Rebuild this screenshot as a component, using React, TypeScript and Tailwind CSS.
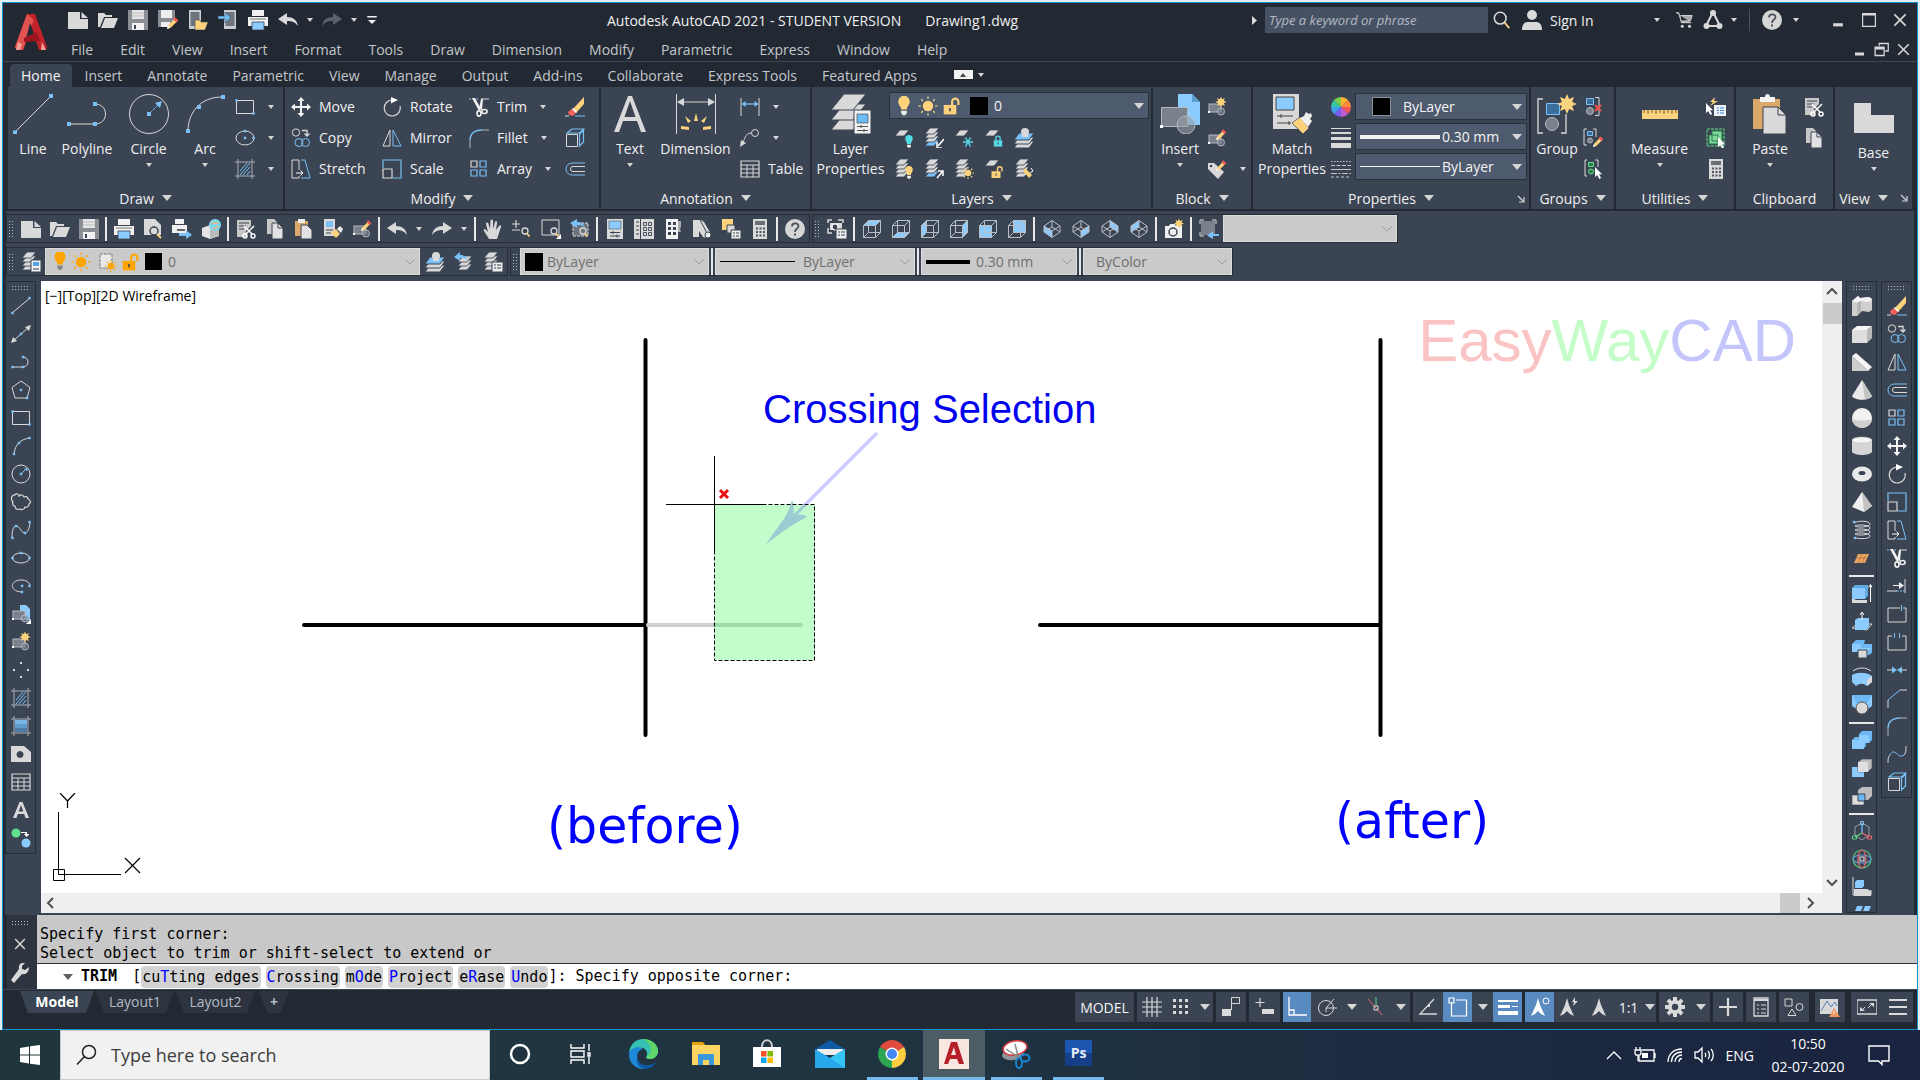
import type { ReactNode } from "react";

const G = "#d9d9d9";
const B = "#79c1f7";
const Y = "#fdd27c";
const D = "#3b4453";

/* ---------- drawing helpers ---------- */

const Dot = ({ x, y }: { x: number; y: number }) => <rect x={x - 1.2} y={y - 1.2} width="2.4" height="2.4" fill={B} stroke="none" />;

const Sheet = ({ y, c = G, x = 1 }: { y: number; c?: string; x?: number }) => (
  <path d={`M${x + 5} ${y}h9l-5 6h-9z`} fill={c} stroke={D} strokeWidth=".8" />
);

const Sheets = ({ mid = G }: { mid?: string }) => (
  <>
    <Sheet y={12} c={mid} />
    <Sheet y={8} />
    <Sheet y={4} />
    <Sheet y={0} />
  </>
);

const Star = ({ x, y, r }: { x: number; y: number; r: number }) => {
  const pts = Array.from({ length: 16 }, (_, i) => {
    const a = (i * Math.PI) / 8;
    const k = i % 2 ? r * 0.55 : r;
    return `${x + k * Math.sin(a)},${y - k * Math.cos(a)}`;
  });
  return <polygon points={pts.join(" ")} fill={Y} />;
};

const Sun = ({ x, y, r, c = Y }: { x: number; y: number; r: number; c?: string }) => (
  <g stroke={c} strokeWidth="1.2">
    <circle cx={x} cy={y} r={r * 0.55} fill={c} stroke="none" />
    {[0, 45, 90, 135, 180, 225, 270, 315].map((a) => (
      <path key={a} d={`M${x} ${y - r * 0.75}V${y - r}`} transform={`rotate(${a} ${x} ${y})`} />
    ))}
  </g>
);

const Bulb = ({ x, y, k = 1, c = Y, b = "#eee" }: { x: number; y: number; k?: number; c?: string; b?: string }) => (
  <g transform={`translate(${x} ${y}) scale(${k})`}>
    <path d="M-5-3a5 5 0 0 1 10 0c0 3-2.500 4-2.500 7h-5c0-3-2.500-4-2.500-7z" fill={c} />
    <path d="M-2.500 5h5v2l-1.500 2h-2l-1.500-2z" fill={b} />
  </g>
);

const Lock = ({ x, y, k = 1, c = Y, open = true }: { x: number; y: number; k?: number; c?: string; open?: boolean }) => (
  <g transform={`translate(${x} ${y}) scale(${k})`}>
    <path d={open ? "M2-1v-3a3 3 0 0 1 6 0v3" : "M-3-1v-3a3 3 0 0 1 6 0v3"} fill="none" stroke={c} strokeWidth="2" />
    <rect x="-6" y="-1" width="12" height="9" fill={c} />
    <path d="M0 2v3" stroke={D} strokeWidth="1.500" />
  </g>
);

const Pencil = ({ x, y, k = 1 }: { x: number; y: number; k?: number }) => (
  <g transform={`translate(${x} ${y}) scale(${k})`}>
    <path d="M0 10l1.500-4 6-6 2.500 2.500-6 6z" fill={Y} />
    <path d="M6-1.500 8-3.500 11.500 0 9.500 2z" transform="translate(0 1.500)" fill="#ef5b5b" />
    <path d="M0 10l1-3 2 2z" fill="#fff" />
  </g>
);

const Block = () => (
  <g stroke="#b4b8c0" fill="#7b818c">
    <rect x="2" y="7" width="12" height="8" />
    <circle cx="14" cy="14.500" r="3.500" fillOpacity=".6" />
    <path d="M1 14h2v2H1z" fill="#fff" stroke="none" />
  </g>
);

const Cursor = ({ x, y }: { x: number; y: number }) => (
  <path d={`M${x} ${y}v10l2.300-2 2 4 1.800-1-2-3.800h3z`} fill="#fff" />
);

const Cube = ({ face }: { face: string }) => (
  <>
    <path d={face} fill="#8ccbff" />
    <path d="M1.500 6.500h12v12h-12zM6.500 1.500h12v12h-12zM1.500 6.500l5-5M13.500 6.500l5-5M13.500 18.500l5-5M1.500 18.500l5-5" fill="none" stroke="#b9bfc7" />
  </>
);

const Iso = ({ face }: { face: string }) => (
  <>
    <path d={face} fill="#8ccbff" />
    <path d="M10 1.500 18 7v6l-8 5.500L2 13V7zM2 7l8 5 8-5M10 12v6.500M2 13l8-5 8 5M10 8V1.500" fill="none" stroke="#b9bfc7" />
  </>
);

const Magnifier = ({ x, y }: { x: number; y: number }) => (
  <g fill="none" strokeWidth="1.300">
    <circle cx={x} cy={y} r="3" stroke={G} />
    <path d={`M${x + 2} ${y + 2.5}l2.500 3`} stroke={Y} strokeWidth="1.800" />
  </g>
);

/* ---------- 20px icons ---------- */

const ICONS: Record<string, ReactNode> = {
  new: <path d="M0 2h12v7h8v10H0zM13.500 2 20 8h-6.500z" fill={G} />,
  open: <path d="M0 3h6l2 2h6v2H6L2 17H0zM7 8h13l-4 10H3z" fill={G} />,
  save: (
    <>
      <path d="M0 0h20v20H0z" fill="#8b8f95" />
      <path d="M4 0h12v9H4z" fill="#e6e6e6" />
      <path d="M4 3h12M4 6h12" stroke="#bbb" />
      <path d="M4 13h12v7H4z" fill="#f2f2f2" />
      <path d="M6 15h2v4H6z" fill={D} />
    </>
  ),
  saveAs: (
    <>
      <path d="M0 0h17v11l-6 6H0z" fill="#8b8f95" />
      <path d="M3 0h11v8H3zM3 12h9v5H3z" fill="#eee" />
      <Pencil x={9} y={9} />
    </>
  ),
  mobileOpen: (
    <>
      <path d="M1 0h12v19H1z" fill="#c9cdd1" />
      <path d="M2.500 2h9v14h-9z" fill="#6f757d" />
      <path d="M7 10h5l1 2h7l-3 8H7z" fill={Y} stroke={D} strokeWidth=".6" />
    </>
  ),
  mobileSave: (
    <>
      <path d="M6 0h12v19H6z" fill="#c9cdd1" />
      <path d="M7.500 2h9v14h-9z" fill="#6f757d" />
      <path d="M0 6h7V2l6 5.500-6 5.500V9H0z" fill="#6fbcf5" stroke={D} strokeWidth=".6" />
    </>
  ),
  print: (
    <>
      <path d="M4 0h12v6H4zM0 7h20v9H0z" fill="#f0f0f0" />
      <path d="M2 9h16" stroke="#777" />
      <path d="M4 12h12v8H4z" fill="#8ccbff" stroke={D} strokeWidth=".8" />
    </>
  ),
  undo: <path d="M0 9 9 3v4c6 0 10 3 11 9-3-4-6-5-11-5v4z" fill={G} />,
  redo: <path d="M20 9 11 3v4C5 7 1 10 0 16c3-4 6-5 11-5v4z" fill="currentColor" />,
  customize: <path d="M4 5h12v2H4zM5 10h10l-5 5z" fill="#f0f0f0" />,
  preview: (
    <>
      <path d="M1 0h11l6 6v10H1z" fill={G} />
      <circle cx="11" cy="12" r="4" fill={G} stroke={D} strokeWidth="1.500" />
      <path d="M14 15l4 4" stroke={Y} strokeWidth="2" />
    </>
  ),
  publish: (
    <>
      <path d="M3 0h9v5H3zM0 6h15v8H0z" fill="#f0f0f0" />
      <path d="M5 10h8v2H5z" fill="#666" />
      <path d="M7 14h7v-3l6 5-6 4v-3H7z" fill={B} />
    </>
  ),
  print3d: (
    <>
      <path d="M1 9l8-3 9 3v8l-9 3-8-3z" fill="#e4e4e4" />
      <path d="M9 11v9l9-3V9z" fill="#bcbcbc" />
      <circle cx="14" cy="6" r="6" fill="#7fd8ea" />
      <path d="M10 3c3 2 5 0 7 2M12 9c2 1 4 0 5-2" stroke="#f3b27a" fill="none" strokeWidth="1.500" />
    </>
  ),
  cut: (
    <>
      <path d="M1 1h14v6l-5 5v6H1z" fill="#c8c8c8" />
      <path d="M3 4h10M3 7h7M3 10h5" stroke={D} />
      <path d="M8 7l8 8M18 7l-8 8" stroke="#fff" strokeWidth="1.500" />
      <g fill="none" stroke="#fff" strokeWidth="1.500">
        <circle cx="9" cy="17" r="2" />
        <circle cx="17" cy="17" r="2" />
      </g>
    </>
  ),
  copy: (
    <>
      <path d="M2 0h7l3 3v12H2z" fill="#c8c8c8" />
      <path d="M7 4h6l5 5v11H7z" fill="#e2e2e2" stroke={D} />
      <path d="M13 4v5h5" fill="none" stroke={D} />
    </>
  ),
  paste: (
    <>
      <path d="M1 2h13v15H1z" fill="#d9a86a" />
      <path d="M4 0h7v4H4z" fill="#eee" />
      <path d="M7 6h6l5 5v9H7z" fill="#e2e2e2" stroke={D} />
    </>
  ),
  matchProps: (
    <>
      <path d="M1 0h11v17H1z" fill={G} />
      <path d="M3 2h7v6H3z" fill={B} />
      <path d="M3 11h7M3 14h5" stroke={D} />
      <path d="M8 14l5-4 4 5-4 4z" fill={Y} />
      <path d="M14 10l3-3 3 3-2 4z" fill="#eee" />
    </>
  ),
  blockEdit: (
    <>
      <Block />
      <Pencil x={9} y={3} k={0.9} />
    </>
  ),
  blockNew: (
    <>
      <Block />
      <Star x={14} y={5} r={5.5} />
    </>
  ),
  blockInsert: (
    <>
      <path d="M9 1h6l4 4v11H9z" fill="#8ccbff" />
      <Block />
      <path d="M20 15v5h-5z" fill="#fff" />
    </>
  ),
  tagEdit: (
    <>
      <path d="M1 4h6l10 9-6 7L1 10z" fill={G} />
      <circle cx="4" cy="7" r="1.300" fill={D} />
      <Pencil x={9} y={3} k={0.9} />
    </>
  ),
  hand: (
    <path d="M6 20 1 12c-1-2 1-3 2-1l2 2L3 5c0-2 2-2 2.500 0L7 10 7.500 2c.2-2 2.500-2 2.500 0v8l2-7c.5-2 2.500-1 2 1l-1 7 3-4c1-1.500 3-.5 2 1l-4 12z" fill={G} />
  ),
  zoomRt: (
    <>
      <path d="M0 5h8M4 1v8M0 11h8" stroke={G} strokeWidth="1.200" />
      <Magnifier x={13} y={12} />
    </>
  ),
  zoomWin: (
    <>
      <path d="M1 1h17v15H1z" fill="none" stroke={G} />
      <Magnifier x={13} y={12} />
      <path d="M20 15v5h-5z" fill="#fff" />
    </>
  ),
  zoomPrev: (
    <>
      <path d="M3 4h15v13H3z" fill="#6d737d" stroke={G} strokeDasharray="3 1" />
      <path d="M0 4l7-4v3c5 0 7 2 8 6-2-3-4-3-8-3v3z" fill={B} />
      <Magnifier x={13} y={12} />
    </>
  ),
  props: (
    <>
      <path d="M2 0h16v20H2z" fill={G} />
      <path d="M4 2h12v8H4z" fill="#8ccbff" stroke="#555" strokeWidth=".6" />
      <path d="M5 13.500h10M5 17h10M8 12v3M12 15.500v3" stroke={D} />
    </>
  ),
  designCenter: (
    <>
      <path d="M0 0h6v20H0zM7 0h13v20H7z" fill={G} />
      <path d="M2 3h3M2 7h3M2 11h3M2 15h3" stroke={D} />
      <path d="M9.500 3.500h3v3h-3zM14.500 3.500h3v3h-3zM9.500 8.500h3v3h-3zM14.500 8.500h3v3h-3zM9.500 13.500h3v3h-3zM14.500 13.500h3v3h-3z" fill="none" stroke={D} strokeWidth=".9" />
    </>
  ),
  palettes: (
    <>
      <path d="M3 0h12v20H3z" fill="#f2f2f2" />
      <path d="M15 2h3v6l-1 2 1 3h-3z" fill="#aaa" />
      <path d="M5 3h3v3H5zM10 3h3v3h-3zM5 8h3v3H5zM10 8h3v3h-3zM5 13h3v3H5zM10 13h3v3h-3z" fill={D} />
    </>
  ),
  sheetSet: (
    <>
      <path d="M1 1h8l3 2 7 12-4 4-4-1-4-6v6H1z" fill={G} />
      <path d="M8 1l8 15" stroke={D} />
      <circle cx="16" cy="16" r="3" fill="#eee" stroke={D} />
    </>
  ),
  markup: (
    <>
      <path d="M1 0h11v11H1z" fill={Y} />
      <path d="M6 6h8v8H6z" fill={G} stroke={D} />
      <path d="M10 11h10v9H10z" fill="#eee" stroke={D} />
      <path d="M12 14h2M15 14h3M12 17h2M15 17h3" stroke={D} />
    </>
  ),
  calc: (
    <>
      <path d="M3 0h14v20H3z" fill={G} />
      <path d="M5 2h10v4H5z" fill="#6b6f76" />
      <path d="M6 9.500h9M6 13h9M6 16.500h9" stroke="#50555e" strokeWidth="2" strokeDasharray="2 1.500" />
    </>
  ),
  help: (
    <>
      <circle cx="10" cy="10" r="10" fill="#d6d6d6" />
      <path d="M7 7.500c0-4 6.500-4 6.500-.5C13.500 10 10 9.500 10 13" fill="none" stroke="#4b515b" strokeWidth="1.800" />
      <path d="M9 14.500h2v2H9z" fill="#4b515b" />
    </>
  ),
  namedView: (
    <>
      <path d="M1 4V1h4M11 1h5v3M1 9v5h4" fill="none" stroke={G} strokeWidth="1.500" />
      <path d="M3 4h12v7H3z" fill={G} />
      <circle cx="8" cy="8" r="3" fill={D} stroke="#fff" strokeWidth="1.200" />
      <path d="M9 10h11v10H9z" fill="#eee" stroke={D} />
      <path d="M11 13h2M14 13h4M11 16h2M14 16h4" stroke={D} />
    </>
  ),
  cubeTop: <Cube face="M1.500 6.500l5-5h12l-5 5z" />,
  cubeBottom: <Cube face="M1.500 18.500l5-5h12l-5 5z" />,
  cubeLeft: <Cube face="M1.500 6.500l5-5v12l-5 5z" />,
  cubeRight: <Cube face="M13.500 6.500l5-5v12l-5 5z" />,
  cubeFront: <Cube face="M1.500 6.500h12v12h-12z" />,
  cubeBack: <Cube face="M6.500 1.500h12v12h-12z" />,
  isoSW: <Iso face="M2 7l8 5v6.500L2 13z" />,
  isoSE: <Iso face="M10 12l8-5v6l-8 5.500z" />,
  isoNE: <Iso face="M10 1.500 18 7v6l-8-5z" />,
  isoNW: <Iso face="M10 1.500 2 7v6l8-5z" />,
  camera: (
    <>
      <path d="M1 7h4l1-2h5l1 2h6v12H1z" fill="#eee" />
      <circle cx="9" cy="13" r="4" fill="#eee" stroke={D} strokeWidth="1.500" />
      <Star x={15} y={4.5} r={5} />
    </>
  ),
  vport: (
    <>
      <path d="M2 2h14v14H2z" fill="#7b818c" />
      <path d="M1 5V1h4M13 1h4v4M1 13v4h4" stroke={G} />
      <path d="M20 15h-6v-3l-6 4.500 6 3.500v-3h6z" fill={B} />
    </>
  ),
  /* draw */
  line: (
    <>
      <path d="M1 17 19 2" stroke={G} />
      <Dot x={1.500} y={17} />
      <Dot x={18.500} y={2} />
    </>
  ),
  xline: (
    <>
      <path d="M2 17 18 3" stroke={G} />
      <path d="M0 19l2-6 4 4zM20 1l-2 6-4-4z" fill={G} />
      <Dot x={10} y={10} />
    </>
  ),
  pline: (
    <>
      <path d="M1 15h11a5 5 0 0 0 0-10" fill="none" stroke={G} />
      <Dot x={1.500} y={15} />
      <Dot x={12} y={15} />
      <Dot x={12} y={5} />
    </>
  ),
  polygon: (
    <>
      <path d="M10 1l9 6.500L16 18H4L1 7.500z" fill="none" stroke={G} />
      <Dot x={10} y={10} />
      <Dot x={16} y={18} />
    </>
  ),
  rect: (
    <>
      <path d="M1.500 3.500h17v13h-17z" fill="none" stroke={G} />
      <Dot x={1.500} y={3.500} />
      <Dot x={18.500} y={16.500} />
    </>
  ),
  arc: (
    <>
      <path d="M3 18C4 9 9 3 19 2" fill="none" stroke={G} />
      <Dot x={3} y={18} />
      <Dot x={8} y={7} />
      <Dot x={18.500} y={2} />
    </>
  ),
  circle: (
    <>
      <circle cx="10" cy="10" r="9" fill="none" stroke={G} />
      <path d="M10 10l4-4" stroke={B} />
      <path d="M17 4l-4 .5 3 3z" fill={B} />
      <Dot x={10} y={10} />
    </>
  ),
  cloud: (
    <path d="M2 10C-1 7 1 2 4 3c1-2 4-1 4 1 2-2 4-1 5 1 2-1 4 0 4 2 3 1 3 4 1 5 0 2-2 4-4 3-1 3-4 3-5 2-3 1-5 0-5-3-2 0-3-2-2-4z" fill="none" stroke={G} strokeWidth="1.200" />
  ),
  spline: (
    <>
      <path d="M1 18C1 2 7 5 10 10s8 4 9-8" fill="none" stroke={G} />
      <Dot x={1.500} y={18} />
      <Dot x={5} y={6} />
      <Dot x={14} y={13} />
      <Dot x={18.500} y={2} />
    </>
  ),
  ellipse: (
    <>
      <ellipse cx="10" cy="10" rx="8.500" ry="5" fill="none" stroke={G} />
      <Dot x={1.500} y={10} />
      <Dot x={10} y={5} />
      <Dot x={18.500} y={10} />
    </>
  ),
  ellipseCenter: (
    <>
      <ellipse cx="10" cy="10" rx="9" ry="7" fill="none" stroke={G} />
      <Dot x={10} y={3} />
      <Dot x={10} y={10} />
      <Dot x={18.500} y={10} />
    </>
  ),
  ellipseArc: (
    <>
      <path d="M10 16C-2 15-1 4 10 4c5 0 8 2 9 5" fill="none" stroke={G} />
      <Dot x={11} y={10} />
      <Dot x={18.500} y={10} />
      <Dot x={11} y={16} />
    </>
  ),
  points: <path d="M9 2h2v2H9zM2 9h2v2H2zM16 9h2v2h-2zM9 16h2v2H9z" fill={G} />,
  hatch: (
    <>
      <path d="M3 0v20M17 0v20M0 3h20M0 17h20" stroke="#a9aeb6" />
      <path d="M5 12l7-8M5 16 15 4M8 16l7-8M12 16l3-4" stroke={B} />
    </>
  ),
  gradient: (
    <>
      <path d="M4 4h12v12H4z" fill="#4f7ba6" />
      <path d="M4 4h12v8H4z" fill="#5f9ccd" />
      <path d="M4 4h12v4H4z" fill="#79b6e6" />
      <path d="M3 0v20M17 0v20M0 3h20M0 17h20" stroke="#a9aeb6" />
    </>
  ),
  region: <path fillRule="evenodd" d="M0 2h13l7 6v10H0zm9 5a3.500 3.500 0 1 0 .1 0z" fill={G} />,
  table: (
    <>
      <path d="M1 2h18v16H1z" fill="none" stroke={G} strokeWidth="1.200" />
      <path d="M1 6h18M1 10h18M1 14h18M7 6v12M13 6v12" stroke={G} />
    </>
  ),
  textA: <path fillRule="evenodd" d="M8.500 2h3L18 18h-3.500l-1.300-4H6.800l-1.300 4H2zM10 5l-2.300 6.500h4.600z" fill={G} />,
  addSel: (
    <>
      <circle cx="5" cy="5" r="4.500" fill="#5fe08a" />
      <circle cx="15" cy="15" r="4.500" fill="#8ccbff" />
      <path d="M10 4h6v2h2.500L15.500 9 13 6h1.500V5H10z" fill="#fff" />
    </>
  ),
  /* modify */
  erase: (
    <>
      <path d="M19 0v7l-8 9-4-3z" fill={Y} />
      <path d="M7 12l4 4-3 3-4-1-1-3z" fill="#f0625d" />
      <path d="M7 12l4 4 1-1-4-4z" fill="#fff" />
      <path d="M0 19h4" stroke={G} />
      <path d="M10 19h10" stroke={B} />
    </>
  ),
  copyObj: (
    <g fill="none">
      <circle cx="5" cy="4.500" r="3.700" stroke={G} />
      <circle cx="8" cy="14.500" r="4" stroke={B} />
      <circle cx="14.500" cy="14.500" r="4" stroke={B} />
      <path d="M11 2.500h5v5M13.500 5.500 16 8l2.500-2.500" stroke={G} strokeWidth="1.300" />
    </g>
  ),
  mirror: (
    <>
      <path d="M8 2v16H1z" fill="none" stroke={G} />
      <path d="M11 2v16h8z" fill="none" stroke={B} />
    </>
  ),
  offset: (
    <>
      <path d="M20 4H7a6 6 0 0 0 0 12h13" fill="none" stroke={B} />
      <path d="M20 7.500H8a2.500 2.500 0 0 0 0 5h12" fill="none" stroke={G} />
    </>
  ),
  array: (
    <g fill="none" strokeWidth="1.200">
      <path d="M2 2h6v6H2z" stroke={G} />
      <path d="M11 2h6v6h-6zM2 11h6v6H2zM11 11h6v6h-6z" stroke={B} />
    </g>
  ),
  move: (
    <path d="M10 0l3.500 4H11v5h5V6.500l4 3.500-4 3.500V11h-5v5h2.500L10 20l-3.500-4H9v-5H4v2.500L0 10l4-3.500V9h5V4H6.500z" fill="#f4f4f4" />
  ),
  rotate: (
    <>
      <path d="M18 9a8 8 0 1 1-8-6" fill="none" stroke={G} strokeWidth="1.200" />
      <path d="M9 0l7 3-7 3.500z" fill="#fff" />
    </>
  ),
  scale: (
    <g fill="none">
      <path d="M1 9V1h18v18h-8" stroke={B} strokeWidth="1.200" />
      <path d="M1 10h9v9H1z" stroke={G} strokeWidth="1.200" />
    </g>
  ),
  stretch: (
    <g fill="none">
      <path d="M8 11V1H1v18h7v-2" stroke={G} />
      <path d="M10 1h4l5 18h-9" stroke={B} />
      <path d="M5 14h7M9.500 11.500 12 14l-2.500 2.500" stroke="#fff" />
    </g>
  ),
  trim: (
    <>
      <path d="M0 2h10" stroke={B} strokeDasharray="2 1.500" />
      <path d="M12 2h8" stroke={G} />
      <path d="M3 1h3l6 11-2 2zM12 2h2l-1 11-3-1z" fill="#f0f0f0" />
      <g fill="none" stroke="#f0f0f0" strokeWidth="1.600">
        <ellipse cx="10" cy="16.500" rx="2" ry="2.600" />
        <ellipse cx="15.500" cy="14.500" rx="2.600" ry="2" />
      </g>
    </>
  ),
  extend: (
    <>
      <path d="M0 15h10M18 3v14" stroke={G} />
      <path d="M10 15h8" stroke={B} strokeDasharray="2 1" />
      <path d="M6 9h6V6l5 3.500-5 3.500v-3H6z" fill="#eee" />
    </>
  ),
  breakAt: (
    <>
      <path d="M13 4H1v14h18V4h-3" fill="none" stroke={G} />
      <path d="M14.500 1v6" stroke={B} />
    </>
  ),
  break: (
    <>
      <path d="M5 4H1v14h18V4h-4" fill="none" stroke={G} />
      <path d="M7.500 1v5M12.500 1v5" stroke={B} />
    </>
  ),
  join: (
    <>
      <path d="M0 10h5M15 10h5" stroke={G} />
      <path d="M5 6.500l5 3.500-5 3.500zM15 6.500 10 10l5 3.500z" fill={B} />
    </>
  ),
  chamfer: (
    <>
      <path d="M1 20v-8M13 2h7" stroke={G} />
      <path d="M1 12 13 2" stroke={B} />
    </>
  ),
  fillet: (
    <>
      <path d="M1 20v-8M13 2h7" stroke="#aeb3ba" />
      <path d="M1 12C1 6 5 2 13 2" fill="none" stroke={B} strokeWidth="1.300" />
    </>
  ),
  blend: (
    <>
      <path d="M1 19c0-4 0-6 2-8M19 2c0 4 0 7-2 9" fill="none" stroke={G} />
      <path d="M3 11c5-9 8 5 14 0" fill="none" stroke={B} />
    </>
  ),
  explode: (
    <g fill="none">
      <path d="M1.500 6.500h11v12h-11z" stroke={G} />
      <path d="M2 5l5-4h12l-4.500 4zM14.500 6l4-3.500V14l-4 4z" stroke={B} strokeWidth="1.200" />
    </g>
  ),
  /* annotation */
  dimLinear: (
    <>
      <path d="M1 1v18M19 1v18" stroke={G} />
      <path d="M3 7h14" stroke={B} strokeWidth="1.300" />
      <path d="M1.500 7l4-3v6zM18.500 7l-4-3v6z" fill={B} />
    </>
  ),
  leader: (
    <>
      <circle cx="15" cy="5" r="3.500" fill="none" stroke={G} />
      <path d="M11.500 5C7 5 5 8 3 15" fill="none" stroke={G} />
      <path d="M0 19l1-7 5 3z" fill={G} />
    </>
  ),
  /* layers */
  layerOff: (<><Sheet y={2} /><Bulb x={15} y={13} k={0.75} c="#55dbe8" /></>),
  layerIso: (<><Sheets mid={B} /><path d="M20 11l-6 7M13 14v6h5" stroke="#fff" fill="none" strokeWidth="1.500" /></>),
  layerFreeze: (<><Sheet y={2} /><path d="M9 14h10M11.500 9.500l5 9M16.500 9.500l-5 9" stroke="#55dbe8" strokeWidth="1.500" /></>),
  layerLock: (<><Sheet y={2} /><Lock x={14} y={13} k={0.7} c="#55dbe8" open={false} /></>),
  layerMake: (
    <>
      <path d="M5 13h15l-5 7H0z" fill={G} stroke={D} />
      <path d="M5 9h15l-5 7H0z" fill={G} stroke={D} />
      <path d="M5 5h15l-5 7H0z" fill={B} stroke={D} />
      <circle cx="11" cy="4" r="4" fill={G} />
      <path d="M8 6h6v3H8z" fill={G} />
    </>
  ),
  layerOn: (<><Sheets /><Bulb x={15} y={13} k={0.75} /></>),
  layerUniso: (<><Sheets mid={B} /><path d="M13 19l6-7M14 12h5v5" stroke="#fff" fill="none" strokeWidth="1.500" /></>),
  layerThaw: (<><Sheets /><Sun x={14} y={14} r={6} /></>),
  layerUnlock: (<><Sheet y={1} /><Lock x={12} y={13} k={0.75} /></>),
  layerMatch: (<><Sheets /><path d="M11 9l7 7-3 3-6-7z" fill={Y} /><path d="M17 9l2 3-3 2" stroke="#fff" fill="none" /></>),
  layerPrev: (<><Sheet y={12} x={4} /><Sheet y={8} x={4} /><Sheet y={4} x={4} /><path d="M0 5l6-5v3c5 0 7 2 8 6-2-3-4-3-8-3v3z" fill={B} /></>),
  layerStates: (<><Sheets /><path d="M9 10h11v10H9z" fill="#eee" stroke={D} /><path d="M11 13h2M14 13h4M11 16h2M14 16h4" stroke={D} /></>),
  layerProps: (<><Sheets /><path d="M10 8h10v12H10z" fill="#f2f2f2" stroke={D} /><path d="M12 10h6v4h-6z" fill="#4fa3e6" /><path d="M12 17h6" stroke={D} /></>),
  bulb: <Bulb x={10} y={9} k={1.15} />,
  sun: <Sun x={10} y={10} r={9.5} />,
  lock: <Lock x={8} y={10} k={1.05} />,
  bulbO: <Bulb x={10} y={8} k={1.1} c="#ffa500" b="#888" />,
  sunO: <Sun x={10} y={10} r={9.5} c="#ffa500" />,
  lockO: <Lock x={8} y={10} k={1.05} c="#ffa500" />,
  vpFreezeO: (<><path d="M3 2h12v14H3z" fill="#e8e8e8" stroke="#777" strokeDasharray="3 1" /><Sun x={14} y={14} r={6} c="#ffa500" /></>),
  /* properties */
  wheel: (
    <g>
      {["#ffb52e", "#ff8a3c", "#ef5656", "#c05bd6", "#7b5cf0", "#3fa0e8", "#35c7a4", "#7ccf4e"].map((c, i) => (
        <path key={c} d="M10 10V0a10 10 0 0 1 7.070 2.930z" fill={c} transform={`rotate(${i * 45} 10 10)`} />
      ))}
    </g>
  ),
  weights: <path d="M0 0h20v1H0zM0 4h20v2H0zM0 9h20v3H0zM0 15h20v5H0z" fill={G} />,
  ltypes: (
    <g stroke="#c3c7cc">
      <path d="M0 2.500h20" strokeDasharray="1.500 1.500" />
      <path d="M0 6.500h20" strokeDasharray="4 1.500" />
      <path d="M0 10.500h20" />
      <path d="M0 14.500h20" strokeDasharray="6 1.500 2 1.500" />
      <path d="M0 18h20" strokeDasharray="3 2" />
    </g>
  ),
  /* groups & utilities */
  ungroup: (<><path d="M3.500 1.500h7v6h-7z" fill="#3b6f9b" stroke={B} /><circle cx="7" cy="14" r="3.500" fill="#7b818c" stroke="#b4b8c0" /><path d="M12 .500h4v18h-4" fill="none" stroke={G} /><path d="M12 8l6 6M18 8l-6 6" stroke="#f0504c" strokeWidth="2" /></>),
  groupEdit: (<><path d="M4 1H1v16h3M10 1h3v8" fill="none" stroke={G} /><path d="M4.500 3.500h5v4h-5z" fill="#3b6f9b" stroke={B} /><circle cx="7" cy="12.500" r="2.500" fill="#7b818c" stroke="#b4b8c0" /><Pencil x={10} y={10} k={0.9} /></>),
  groupSel: (<><path d="M4 1H2v16h2M12 1h3v7" fill="none" stroke={G} /><path d="M5.500 3.500h5v4h-5z" fill="#2c7a4c" stroke="#5fe08a" /><circle cx="8" cy="12.500" r="2.500" fill="#2c7a4c" stroke="#5fe08a" /><Cursor x={12} y={8} /></>),
  quickSel: (<><path d="M8 8h12v11H8z" fill="#f2f2f2" /><path d="M11 11h2M14 11h4M11 13.500h2M14 13.500h4M11 16h2M14 16h4" stroke="#2f8be6" /><path d="M8 0L3 5h3L3 9l8-5H7z" fill={Y} transform="translate(1)" /><Cursor x={0} y={6} /></>),
  selAll: (<><path d="M1 1h17v17H1z" fill="none" stroke="#5fe08a" strokeDasharray="3 1" /><path d="M3 7h9v9H3zM6 3h10v10H6z" fill="#7fd89b" stroke="#2c7a4c" /><Cursor x={12} y={9} /></>),
  /* solids */
  polysolid: (
    <>
      <path d="M0 5l6-5 2 2 9-1 3 2v11l-3 2-7-1-5 5H0z" fill="#cfcfcf" />
      <path d="M0 5l6-5 2 2 9-1 3 2-3 3-8-1-4 2z" fill="#f3f3f3" />
      <path d="M5 7l4-2v10l-4 5z" fill="#b5b5b5" />
    </>
  ),
  box: <><path d="M0 6l5-4h15l-5 4z" fill="#f6f6f6" /><path d="M0 6h15v13H0z" fill="#dedede" /><path d="M15 6l5-4v12l-5 5z" fill="#b9b9b9" /></>,
  wedge: <><path d="M0 4l4-3 16 14-4 4z" fill="#f4f4f4" /><path d="M0 4l16 15H0z" fill="#cdcdcd" /></>,
  cone: <><path d="M10 0l10 16c-3 5-17 5-20 0z" fill="#e9e9e9" /><path d="M10 0l10 16c-1 2-4 3-7 3.500z" fill="#c4c4c4" /></>,
  sphere: <><circle cx="10" cy="10" r="10" fill="#f2f2f2" /><path d="M0 11c5 2 15 2 20 0a10 9 0 0 1-20 0z" fill="#cfcfcf" /></>,
  cylinder: <><path d="M0 4h20v12c-3 4-17 4-20 0z" fill="#d5d5d5" /><ellipse cx="10" cy="4" rx="10" ry="3" fill="#f6f6f6" stroke="#bbb" strokeWidth=".5" /></>,
  torus: <><ellipse cx="10" cy="10" rx="10" ry="7.500" fill="#eaeaea" /><ellipse cx="10" cy="9" rx="3.500" ry="2" fill={D} /></>,
  pyramid: <><path d="M10 0l10 14-8 6L0 15z" fill="#efefef" /><path d="M10 0l10 14-8 6z" fill="#c2c2c2" /></>,
  helix: (
    <>
      <path d="M2 3c5-3 16-2 16 1S6 8 3 6M3 6c3-2 15-1 15 2S6 12 3 10M3 10c3-2 15-1 15 2s-12 4-15 2M3 14c3-2 15-1 15 2s-10 3-14 2" fill="none" stroke={G} />
      <Dot x={2} y={2} />
      <Dot x={3} y={18} />
    </>
  ),
  plane: <><path d="M6 6h11l-4 9H2z" fill="#eea466" /><path d="M4 10h11M10 6l-4 9M14 6l-4 9" stroke="#a86b36" strokeWidth=".6" /></>,
  extrude: <><path d="M0 15l4 2h11v3H0z" fill={G} /><path d="M0 5l3-3h13v11l-3 3H0z" fill="#5fa9e2" /><path d="M0 5h13v11H0z" fill="#8ccbff" /><path d="M18.500 19V2M16.500 4.500l2-3 1.500 3" stroke="#fff" fill="none" /></>,
  presspull: <><path d="M0 17l5-4h15l-5 6z" fill="none" stroke={G} /><path d="M3 9l3-2h11v9l-3 3H3z" fill="#8ccbff" /><path d="M10 9V2M8 4l2-3 2 3" stroke="#fff" fill="none" /></>,
  sweep: <><path d="M0 5l4-4h9l-1 4h8v9l-5 3H8v-6H0z" fill="#6db8f2" /><path d="M0 5h9v4h11l-5 4H0z" fill="#8ccbff" /><path d="M6 11h9v8H6z" fill={G} stroke={D} /></>,
  revolve: <><path d="M1 4c5-4 13-4 18 0" stroke={G} fill="none" /><path d="M0 8c6-3 14-3 20 1v6l-5 4c-4-3-7-3-11 0l-4-4z" fill="#8ccbff" /><path d="M15 13l5-4v6l-5 4z" fill={G} /></>,
  loft: <><path d="M0 0h20v11l-4 3H4l-4-3z" fill="#8ccbff" /><path d="M0 0l6 10h8L20 0z" fill="#6db8f2" /><circle cx="10" cy="13" r="6" fill={G} stroke="#555" /></>,
  union: <><path d="M0 10l3-3h4V4l3-3h10v9l-3 3h-3v3l-3 3H0z" fill="#6db8f2" /><path d="M0 10h7V5h10v8h-5v6H0z" fill="#8ccbff" /></>,
  subtract: <><path d="M0 9h12v10H0z" fill="#8ccbff" /><path d="M6 4l4-3h10v9l-4 4H6z" fill="#bdbdbd" stroke={D} strokeWidth=".6" /><path d="M6 4h10v10H6z" fill="#e0e0e0" /></>,
  intersect: <><path d="M6 4l4-3h10v9l-4 4H6z" fill="#bdbdbd" /><path d="M0 9h12v10H0z" fill="#dcdcdc" stroke={D} strokeWidth=".6" /><path d="M6 8h7v7H6z" fill="#6db8f2" stroke={D} /></>,
  gizmo: (
    <g fill="none">
      <path d="M3 14V6l7-4 7 4v8l-7 5z" stroke="#9aa0a9" />
      <path d="M10 3v9" stroke={B} strokeWidth="1.300" />
      <path d="M10 12l-7 4" stroke="#57d97e" strokeWidth="1.300" />
      <path d="M10 12l7 4" stroke="#ef6b6b" strokeWidth="1.300" />
      <path d="M8.500.500h3v3h-3z" stroke={B} />
      <path d="M.500 15h4v3h-4z" stroke="#57d97e" />
      <path d="M15.500 15h4v3h-4z" stroke="#ef6b6b" />
    </g>
  ),
  orbit: (
    <g fill="none" strokeWidth="1.200">
      <circle cx="10" cy="10" r="9" stroke="#57c97e" />
      <ellipse cx="10" cy="10" rx="9" ry="4" stroke="#5b9bd1" />
      <ellipse cx="10" cy="10" rx="4" ry="9" stroke="#e06b6b" />
      <path d="M8 8h4v4H8z" stroke={G} />
    </g>
  ),
  ucs: <><path d="M1 0v18h18v-5" fill="none" stroke={G} /><path d="M2 12h13l4 2v5H2z" fill={G} /><path d="M3 5l2-2h7v6l-2 2H3z" fill="#8ccbff" /></>,
  presets: <><path d="M5 1h6l-2 5H3zM13 1h6l-2 5h-6z" fill="#8ccbff" /><path d="M2 8h6v8H2zM10 8h8v8h-8z" fill="#6db8f2" /></>,
  /* status */
  grid: <path d="M5 0v20M10 0v20M15 0v20M0 5h20M0 10h20M0 15h20" stroke={G} strokeWidth="1.200" />,
  snap: <path d="M2 2h3v3H2zM8 2h3v3H8zM14 2h3v3h-3zM2 8h3v3H2zM8 8h3v3H8zM14 8h3v3h-3zM2 14h3v3H2zM8 14h3v3H8zM14 14h3v3h-3z" fill={G} />,
  infer: <><path d="M10.500.500h8v6h-8zM10.500 6v7" fill="none" stroke={G} /><path d="M1 12h9v7H1z" fill={G} /></>,
  dynInput: <><path d="M5 1v9M.500 5.500h9" stroke={G} strokeWidth="1.200" /><path d="M7 12h12v5H7z" fill={G} /></>,
  ortho: <path d="M2 0v18h18M2 13h5v5" fill="none" stroke="#fff" strokeWidth="1.300" />,
  polar: <><circle cx="9" cy="11" r="7.500" fill="none" stroke={G} /><path d="M9 11h11M9 11l8-9M9 11v4" stroke={G} fill="none" /></>,
  isodraft: <><path d="M10 0v9" stroke="#57d97e" /><path d="M2 2l14 16" stroke="#e06b6b" /><path d="M8 9h4v4H8z" fill="none" stroke={G} /></>,
  otrack: <><path d="M16 2 2 17h17" fill="none" stroke={G} strokeWidth="1.300" /><path d="M10 7h2v3h-2z" fill={G} /></>,
  osnap: <><path d="M3.500 5v14h15V3H8" fill="none" stroke="#fff" strokeWidth="1.200" /><path d="M1 1h5v5H1z" fill="none" stroke="#fff" strokeWidth="1.200" /></>,
  lweight: <path d="M0 3h20v2H0zM0 8h12v3H0zM0 14h20v4H0zM14 9h6v1h-6z" fill="#fff" />,
  annoVis: <><path d="M8 1l2 7 5 11-4-2-3-3-3 3-4 2 5-11z" fill="#fff" /><circle cx="16" cy="4" r="3" fill="none" stroke="#fff" /></>,
  annoAuto: <><path d="M8 1l2 7 5 11-4-2-3-3-3 3-4 2 5-11z" fill={G} /><path d="M16 0l-3 5h2l-1 4 5-5h-3z" fill={G} /></>,
  annoScale: <path d="M10 1l2 7 5 11-4-2-3-3-3 3-4 2 5-11z" fill={G} />,
  gear: (
    <g>
      {[0, 45, 90, 135].map((a) => (
        <path key={a} d="M8 0h4v20H8z" fill={G} transform={`rotate(${a} 10 10)`} />
      ))}
      <circle cx="10" cy="10" r="7" fill={G} />
      <circle cx="10" cy="10" r="3.200" fill={D} />
    </g>
  ),
  plus: <path d="M10 1v18M1 10h18" stroke={G} strokeWidth="2.200" />,
  quickProps: <><path d="M3 1h14v18H3z" fill="none" stroke={G} strokeWidth="1.300" /><path d="M3 3h14" stroke={G} strokeWidth="2" /><path d="M6 8h2M10 8h5M6 12h2M10 12h5M6 16h2M10 16h5" stroke={G} /></>,
  isolate: <g fill="none" stroke={G}><path d="M1 2h7v7H1z" /><circle cx="15.500" cy="10" r="3.500" /><path d="M4 18.500 8 12l4 6.500z" /></g>,
  hardware: <><path d="M0 2h18v15H0z" fill={G} /><path d="M1 14L7 4l4 6 4-5 2 4" fill="none" stroke="#4f7fae" /><path d="M9 20l5-9 6 9z" fill="#f0935c" /><path d="M14 14v3" stroke="#fff" /></>,
  clean: <><path d="M0 3h20v14H0z" fill="none" stroke={G} strokeWidth="1.300" /><path d="M12 6h5v4zM3 10v4h5z" fill={G} /><path d="M11 11l4-4M5 13l3-3" stroke={G} /></>,
  menu: <path d="M1 3h18M1 10h18M1 17h18" stroke={G} strokeWidth="2" />,
  /* title bar */
  search: <><circle cx="8" cy="8" r="6.500" fill="none" stroke={G} strokeWidth="1.700" /><path d="M13 13l5 6" stroke={Y} strokeWidth="2" /></>,
  person: <><circle cx="10" cy="5" r="5" fill={G} /><path d="M0 20c0-6 3-8 6-8h8c3 0 6 2 6 8z" fill={G} /></>,
  cart: <><path d="M0 2h3l3 11h11M5 5h13l-2 6H6" fill="#a8a8a8" stroke={G} /><circle cx="7" cy="17" r="1.700" fill={G} /><circle cx="15" cy="17" r="1.700" fill={G} /></>,
  share: <><path d="M10 2l7 14H3z" fill="none" stroke={G} strokeWidth="2" /><circle cx="10" cy="3" r="3" fill={G} /><circle cx="3.500" cy="16" r="3" fill={G} /><circle cx="16.500" cy="16" r="3" fill={G} /></>,
  min: <path d="M4 14h12v4H4z" fill={G} />,
  max: <path d="M2 2h16v16H2zM2 3.500h16" fill="none" stroke={G} strokeWidth="1.500" />,
  close: <path d="M3 3l14 14M17 3 3 17" stroke={G} strokeWidth="2" />,
  restore: <><path d="M7 5V2h12v10h-4" fill="none" stroke={G} strokeWidth="1.700" /><path d="M1.500 7h12v11h-12zM1.500 9h12" fill="none" stroke={G} strokeWidth="1.700" /></>,
  wrench: <path d="M19 4l-4 3-3-1 0-3 3-3c-4-1-7 2-6 6L1 17l3 3 8-9c4 1 7-2 7-7z" fill={G} />,
};

/* ---------- 40px ribbon icons ---------- */

const BIG: Record<string, ReactNode> = {
  line: (
    <>
      <path d="M2 38 38 2" stroke={G} />
      <path d="M0 36.500h4v3.500H0zM36 0h4v4h-4z" fill={B} />
    </>
  ),
  polyline: (
    <>
      <path d="M2 30h26c14 0 14-20 0-20" fill="none" stroke={G} />
      <path d="M0 28h4v4H0zM26 28h4v4h-4zM26 8h4v4h-4z" fill={B} />
    </>
  ),
  circle: (
    <>
      <circle cx="20" cy="20" r="19.500" fill="none" stroke={G} />
      <path d="M20 20 29 11" stroke={B} strokeDasharray="4 1" />
      <path d="M33 7l-7 2 5 5zM18 18h4v4h-4z" fill={B} />
    </>
  ),
  arc: (
    <>
      <path d="M3 37C3 18 16 3 37 3" fill="none" stroke={G} />
      <path d="M1 35h4v4H1zM12 11h4v4h-4zM36 1h4v4h-4z" fill={B} />
    </>
  ),
  text: <path fillRule="evenodd" d="M18 2h4l14 36h-5l-4-11H13L9 38H4zM20 7l-5.500 16h11z" fill={G} />,
  dimension: (
    <>
      <path d="M.500 0v40M39.500 0v40M2 8h36" stroke={G} />
      <path d="M1 8l7-4v8zM39 8l-7-4v8z" fill={G} />
      <g fill={Y}>
        <path d="M18 27l2-8 2 8zM9 22l6 5-3 2zM31 22l-6 5 3 2zM5 32l8 1v3l-8-1zM35 32l-8 1v3l8-1z" />
      </g>
    </>
  ),
  layers: (
    <>
      {[20, 10, 0].map((y) => (
        <path key={y} d={`M13 ${y}h22L22 ${y + 16}H0z`} fill={G} stroke={D} />
      ))}
      <path d="M23 16h17v24H23z" fill="#f2f2f2" stroke={D} />
      <path d="M26 20h11v9H26z" fill="#6bbcf5" stroke="#333" strokeWidth=".6" />
      <path d="M26 32.500h11M26 36.500h11M30 31v3M33 35v3" stroke="#555" />
    </>
  ),
  insert: (
    <>
      <path d="M18 0h14l8 8v23H18z" fill="#8ccbff" />
      <path d="M32 0v8h8" fill="#5a9fd4" />
      <path d="M1.500 13.500h26v19h-26z" fill="#7b818c" stroke="#b4b8c0" />
      <circle cx="26" cy="31" r="9" fill="#9aa0a9" fillOpacity=".6" stroke="#b4b8c0" />
      <path d="M0 31h3v3H0z" fill="#fff" />
    </>
  ),
  match: (
    <>
      <path d="M1 0h26v35H1z" fill={G} />
      <path d="M4 3h18v13H4z" fill="#8ccbff" stroke="#444" />
      <path d="M5 22h16M5 29h14M9 20v4M17 27v4" stroke="#444" />
      <path d="M20 29l8-6 9 11-6 6z" fill={Y} stroke={D} strokeWidth=".7" />
      <path d="M28 24l4-2 2-4 3 2 2-1 1 3-2 3 2 2-4 6z" fill="#eee" />
    </>
  ),
  group: (
    <>
      <path d="M6 5H1v34h5M24 39h5V20" fill="none" stroke={G} strokeWidth="1.300" />
      <path d="M9.500 9.500h13v11h-13z" fill="#3b6f9b" stroke={B} />
      <circle cx="15" cy="30" r="6.500" fill="#7b818c" stroke="#b4b8c0" />
      <Star x={30} y={10} r={10} />
    </>
  ),
  measure: (
    <>
      <path d="M2 16h36v9H2z" fill={Y} />
      <path d="M4 16v3M8 16v4M12 16v3M16 16v4M20 16v3M24 16v4M28 16v3M32 16v4M36 16v3" stroke="#6e5a2c" />
    </>
  ),
  paste: (
    <>
      <path d="M3 5h27v30H3z" fill="#d9a86a" />
      <path d="M10 3h5c0-4 5-4 5 0h5v5H10z" fill="#f4f4f4" />
      <path d="M13 13h15l8 8v19H13z" fill={G} stroke={D} />
      <path d="M28 13v8h8" fill="none" stroke={D} />
    </>
  ),
  base: <path d="M0 5h17v12h23v18H0z" fill={G} />,
};

const FIXED = "block shrink-0";

function Icon({ name, size = 20 }: { name: string; size?: number }) {
  return (
    <svg className={FIXED} width={size} height={size} viewBox="0 0 20 20" fill="none" aria-hidden="true">
      {ICONS[name]}
    </svg>
  );
}

function BigIcon({ name }: { name: string }) {
  return (
    <svg className={FIXED} width="40" height="40" viewBox="0 0 40 40" aria-hidden="true">
      {BIG[name]}
    </svg>
  );
}

function Caret({ big = false, color = "#d6d6d6" }: { big?: boolean; color?: string }) {
  return (
    <svg className={FIXED} width={big ? 10 : 6} height={big ? 6 : 4} viewBox="0 0 10 6" preserveAspectRatio="none" aria-hidden="true">
      <path d="M0 0h10L5 6z" fill={color} />
    </svg>
  );
}

const Chevron = () => (
  <svg className={FIXED} width="10" height="6" viewBox="0 0 10 6" aria-hidden="true">
    <path d="M.500.500 5 5 9.500.500" fill="none" stroke="#9b9b9b" />
  </svg>
);

function Grip({ vertical = false }: { vertical?: boolean }) {
  return (
    <svg className={FIXED} width={vertical ? 4 : 17} height={vertical ? 16 : 4} aria-hidden="true">
      {vertical ? (
        <path d="M.500 0v16M3.500 0v16" stroke="#b5bac2" strokeDasharray="1 2" />
      ) : (
        <path d="M0 .500h17M0 3.500h17" stroke="#b5bac2" strokeDasharray="1 2" />
      )}
    </svg>
  );
}

/* ---------- title bar ---------- */

const MENUS = ["File", "Edit", "View", "Insert", "Format", "Tools", "Draw", "Dimension", "Modify", "Parametric", "Express", "Window", "Help"];
const TABS = ["Home", "Insert", "Annotate", "Parametric", "View", "Manage", "Output", "Add-ins", "Collaborate", "Express Tools", "Featured Apps"];

function TitleBar() {
  return (
    <header className="flex h-[59px] shrink-0 border-b border-[#3d4654]">
      <button className="flex w-[60px] shrink-0 items-center pl-3" aria-label="Application menu">
        <svg width="32" height="36" viewBox="0 0 32 36" aria-hidden="true">
          <path d="M12 0h8l12 33-1 3h-7l-3-9-9-1-4 10H2l-2-3z" fill="#c0232a" />
          <path d="M12 0 0 33l2 3h6l8-24 3-6z" fill="#e2524f" />
          <path d="M15 9l5 13-9 3z" fill="#222933" />
          <path d="M9 24l13-6 3 9-16 1z" fill="#9c151d" />
          <path d="M27 28l4 8h-5zM3 28l4 2-2 6H1z" fill="#f3a09b" />
        </svg>
      </button>
      <div className="flex min-w-0 flex-1 flex-col">
        <div className="flex h-[34px] items-center">
          <div className="flex w-[544px] shrink-0 items-center text-[#5c626c]">
            {["new", "open", "save", "saveAs", "mobileOpen", "mobileSave", "print", "undo"].map((n) => (
              <button key={n} className="flex w-[30px] justify-center" aria-label={n}>
                <Icon name={n} />
              </button>
            ))}
            <button className="flex w-[14px] justify-center" aria-label="Undo list"><Caret /></button>
            <button className="flex w-[30px] justify-center" aria-label="redo"><Icon name="redo" /></button>
            <button className="flex w-[14px] justify-center" aria-label="Redo list"><Caret /></button>
            <button className="flex w-[22px] justify-center" aria-label="Customize"><Icon name="customize" size={16} /></button>
          </div>
          <h1 className="flex flex-1 gap-6 whitespace-nowrap text-[14px] text-[#f0f0f0]">
            <span>Autodesk AutoCAD 2021 - STUDENT VERSION</span>
            <span>Drawing1.dwg</span>
          </h1>
          <div className="flex shrink-0 items-center">
            <svg width="5" height="9" aria-hidden="true"><path d="M0 0v9l5-4.500z" fill={G} /></svg>
            <input
              aria-label="Search help"
              placeholder="Type a keyword or phrase"
              className="ml-2 h-[26px] w-[223px] bg-[#475164] px-1 text-[13px] italic placeholder:text-[#b4bac3]"
            />
            <button className="flex w-7 justify-center" aria-label="Search"><Icon name="search" size={18} /></button>
            <button className="ml-1.5 flex w-[125px] items-center gap-2 text-[14px] text-[#f0f0f0]"><Icon name="person" />Sign In</button>
            <button className="flex w-5 justify-center" aria-label="Account"><Caret /></button>
            <button className="flex w-9 justify-center" aria-label="App store"><Icon name="cart" size={18} /></button>
            <button className="flex w-5 justify-center" aria-label="Autodesk app"><Icon name="share" /></button>
            <button className="flex w-[22px] justify-center" aria-label="App list"><Caret /></button>
            <span className="mx-1 h-[22px] w-px bg-[#4b5463]" />
            <button className="flex w-9 justify-center" aria-label="Help"><Icon name="help" /></button>
            <button className="flex w-3 justify-center" aria-label="Help list"><Caret /></button>
            <div className="ml-5 flex">
              {["min", "max", "close"].map((n) => (
                <button key={n} className="flex w-[31px] justify-center" aria-label={n}><Icon name={n} size={16} /></button>
              ))}
            </div>
            <span className="w-0.5" />
          </div>
        </div>
        <div className="flex h-6 items-center">
          <nav className="flex flex-1 gap-[27px] pl-2 text-[14px] text-[#c3c6ca]">
            {MENUS.map((m) => (
              <button key={m}>{m}</button>
            ))}
          </nav>
          <div className="flex pr-[3px]">
            {["min", "restore", "close"].map((n) => (
              <button key={n} className="flex w-[22px] justify-center" aria-label={`${n} drawing`}><Icon name={n} size={15} /></button>
            ))}
          </div>
        </div>
      </div>
    </header>
  );
}

function RibbonTabs() {
  return (
    <nav className="flex h-[25px] shrink-0 items-end gap-px pl-[7px] text-[14px] text-[#c3c6ca]">
      {TABS.map((t, i) => (
        <button
          key={t}
          className={i === 0 ? "h-[23px] rounded-t-sm bg-[#3b4453] px-[11px] text-[#f4f4f4]" : "h-[23px] px-3"}
        >
          {t}
        </button>
      ))}
      <button className="mb-2 ml-6 flex items-center gap-[5px]" aria-label="Minimize ribbon">
        <span className="flex h-[9px] w-[19px] items-center justify-center bg-[#f2f2f2]">
          <svg width="6" height="4" aria-hidden="true"><path d="M0 4l3-4 3 4z" fill="#444" /></svg>
        </span>
        <Caret />
      </button>
    </nav>
  );
}

/* ---------- ribbon ---------- */

function Panel({ title, width, caret = true, launcher = false, children }: { title: string; width: string; caret?: boolean; launcher?: boolean; children: ReactNode }) {
  return (
    <section className={`${width} flex shrink-0 flex-col border-r-2 border-[#232a34] bg-[#3b4453]`}>
      <div className="flex h-[100px] pt-1">{children}</div>
      <div className="relative flex h-[22px] items-center justify-center gap-2 text-[14px]">
        {title}
        {caret && <Caret big />}
        {launcher && (
          <svg className="absolute right-1 top-2" width="8" height="8" aria-hidden="true">
            <path d="M1 1l5 5M7 2v5H2" fill="none" stroke={G} strokeWidth="1.200" />
          </svg>
        )}
      </div>
    </section>
  );
}

function Big({ icon, label, width, caret = false }: { icon: string; label: string; width: string; caret?: boolean }) {
  return (
    <button className={`${width} flex shrink-0 flex-col items-center self-start pt-[3px] text-[14px] leading-5`}>
      <BigIcon name={icon} />
      <span className="mt-[5px] whitespace-pre-line text-center">{label}</span>
      {caret && <span className="mt-1"><Caret /></span>}
    </button>
  );
}

function Small({ icon, label, caret = false }: { icon: string; label?: string; caret?: boolean }) {
  return (
    <button className="flex h-[31px] items-center gap-2 whitespace-nowrap text-[14px]" aria-label={label ?? icon}>
      <Icon name={icon} />
      {label}
      {caret && <span className="ml-[5px]"><Caret /></span>}
    </button>
  );
}

function Column({ width, items }: { width: string; items: [string, string?, boolean?][] }) {
  return (
    <div className={`${width} shrink-0`}>
      {items.map(([icon, label, caret]) => (
        <Small key={icon} icon={icon} label={label} caret={caret} />
      ))}
    </div>
  );
}

function RibbonCombo({ label, value, children }: { label: string; value: string; children?: ReactNode }) {
  return (
    <div className="flex h-[27px] items-center border border-[#2a313c] bg-[#4e5a6e] px-1">
      {children}
      <select aria-label={label} className="min-w-0 flex-1 appearance-none bg-transparent text-[14px] text-[#f4f4f4]">
        <option>{value}</option>
      </select>
      <Caret big />
    </div>
  );
}

function Ribbon() {
  return (
    <div className="mx-[5px] flex h-[122px] shrink-0 text-[#f0f0f0]">
      <Panel title="Draw" width="w-[277px]">
        <Big icon="line" label="Line" width="ml-0.5 w-[46px]" />
        <Big icon="polyline" label="Polyline" width="w-[62px]" />
        <Big icon="circle" label="Circle" width="w-[61px]" caret />
        <Big icon="arc" label="Arc" width="mr-1 w-[52px]" caret />
        <Column width="w-10" items={[["rect", undefined, true], ["ellipseCenter", undefined, true], ["hatch", undefined, true]]} />
      </Panel>
      <Panel title="Modify" width="w-[316px]">
        <Column width="ml-1.5 w-[91px]" items={[["move", "Move"], ["copyObj", "Copy"], ["stretch", "Stretch"]]} />
        <Column width="w-[87px]" items={[["rotate", "Rotate"], ["mirror", "Mirror"], ["scale", "Scale"]]} />
        <Column width="w-[96px]" items={[["trim", "Trim", true], ["fillet", "Fillet", true], ["array", "Array", true]]} />
        <Column width="w-6" items={[["erase"], ["explode"], ["offset"]]} />
      </Panel>
      <Panel title="Annotation" width="w-[211px]">
        <Big icon="text" label="Text" width="ml-1 w-[50px]" caret />
        <Big icon="dimension" label="Dimension" width="w-[81px]" />
        <Column width="ml-1 w-[64px]" items={[["dimLinear", undefined, true], ["leader", undefined, true], ["table", "Table"]]} />
      </Panel>
      <Panel title="Layers" width="w-[341px]">
        <Big icon="layers" label={"Layer\nProperties"} width="w-[77px]" />
        <div className="min-w-0 flex-1 pr-0.5 pt-px">
          <RibbonCombo label="Layer" value="0">
            <span className="flex items-center gap-1 pr-1.5">
              <Icon name="bulb" />
              <Icon name="sun" />
              <Icon name="lock" />
              <span className="ml-1 h-[18px] w-[18px] bg-black" />
            </span>
          </RibbonCombo>
          <div className="mt-[3px] grid w-[150px] grid-cols-5 justify-items-center">
            {["layerOff", "layerIso", "layerFreeze", "layerLock", "layerMake", "layerOn", "layerUniso", "layerThaw", "layerUnlock", "layerMatch"].map((n) => (
              <Small key={n} icon={n} />
            ))}
          </div>
        </div>
      </Panel>
      <Panel title="Block" width="w-[100px]">
        <Big icon="insert" label="Insert" width="w-[54px]" caret />
        <Column width="w-10" items={[["blockNew"], ["blockEdit"], ["tagEdit", undefined, true]]} />
      </Panel>
      <Panel title="Properties" width="w-[278px]" launcher>
        <Big icon="match" label={"Match\nProperties"} width="w-[78px]" />
        <div className="flex w-[24px] flex-col">
          <Small icon="wheel" />
          <Small icon="weights" />
          <Small icon="ltypes" />
        </div>
        <div className="flex min-w-0 flex-1 flex-col gap-[3px] pr-0.5 pt-0.5">
          <RibbonCombo label="Object color" value="ByLayer">
            <span className="mx-3 h-[19px] w-[19px] border border-[#8b919b] bg-black" />
          </RibbonCombo>
          <RibbonCombo label="Lineweight" value="0.30 mm">
            <span className="mr-0.5 h-1 w-20 bg-[#f2f2f2]" />
          </RibbonCombo>
          <RibbonCombo label="Linetype" value="ByLayer">
            <span className="mr-0.5 h-px w-20 bg-[#f2f2f2]" />
          </RibbonCombo>
        </div>
      </Panel>
      <Panel title="Groups" width="w-[85px]">
        <Big icon="group" label="Group" width="w-[52px]" />
        <Column width="w-6" items={[["ungroup"], ["groupEdit"], ["groupSel"]]} />
      </Panel>
      <Panel title="Utilities" width="w-[120px]">
        <Big icon="measure" label="Measure" width="w-[87px]" caret />
        <Column width="ml-[3px] w-6" items={[["quickSel"], ["selAll"], ["calc"]]} />
      </Panel>
      <Panel title="Clipboard" width="w-[99px]" caret={false}>
        <Big icon="paste" label="Paste" width="w-[68px]" caret />
        <Column width="w-6" items={[["cut"], ["copy"]]} />
      </Panel>
      <section className="flex flex-1 flex-col bg-[#3b4453]">
        <div className="flex h-[100px] justify-center pt-2">
          <Big icon="base" label="Base" width="w-[60px]" caret />
        </div>
        <div className="flex h-[22px] items-center justify-center gap-2 text-[14px]">
          View
          <Caret big />
          <svg className="ml-1" width="8" height="8" aria-hidden="true">
            <path d="M1 1l5 5M7 2v5H2" fill="none" stroke={G} strokeWidth="1.200" />
          </svg>
        </div>
      </section>
    </div>
  );
}

/* ---------- classic toolbars ---------- */

function ToolRow({ items }: { items: string[] }) {
  return (
    <>
      {items.map((n, i) =>
        n === "|" ? (
          <span key={i} className="flex h-6 w-[6px] justify-center"><span className="w-0.5 bg-[#e8e8e8]" /></span>
        ) : n === "v" ? (
          <button key={i} className="flex w-4 justify-center" aria-label="List"><Caret /></button>
        ) : (
          <button key={i} className="flex w-[29px] justify-center text-[#d9d9d9]" aria-label={n}><Icon name={n} /></button>
        )
      )}
    </>
  );
}

function GrayCombo({ label, value, width, children }: { label: string; value: string; width: string; children?: ReactNode }) {
  return (
    <div className={`${width} flex h-[27px] shrink-0 items-center border border-[#dcdcdc] bg-[#cacaca] px-1`}>
      {children}
      <select aria-label={label} className="min-w-0 flex-1 appearance-none bg-transparent text-[14px] text-[#6f6f6f]">
        <option>{value}</option>
      </select>
      <Chevron />
    </div>
  );
}

const BAR = "flex h-[29px] items-center border border-[#262d37] pl-0.5";
const SPLIT = "mx-0.5 h-[27px] w-0.5 bg-[#e8e8e8]";

function Toolbars() {
  return (
    <div className="mx-[3px] mt-0.5 flex shrink-0 flex-col gap-1 bg-[#3b4453] pb-1 pt-[3px]">
      <div className="flex">
        <div className={BAR}>
          <Grip vertical />
          <span className="w-[3px]" />
          <ToolRow
            items={["new", "open", "save", "|", "print", "preview", "publish", "print3d", "|", "cut", "copy", "paste", "matchProps", "blockEdit", "|", "undo", "v", "redo", "v", "|", "hand", "zoomRt", "zoomWin", "zoomPrev", "|", "props", "designCenter", "palettes", "sheetSet", "markup", "calc", "|", "help"]}
          />
        </div>
        <div className={`${BAR} ml-0.5`}>
          <Grip vertical />
          <span className="w-[3px]" />
          <ToolRow
            items={["namedView", "|", "cubeTop", "cubeBottom", "cubeLeft", "cubeRight", "cubeFront", "cubeBack", "|", "isoSW", "isoSE", "isoNE", "isoNW", "|", "camera", "|", "vport"]}
          />
          <GrayCombo label="Viewport scale" value="" width="w-[174px]" />
        </div>
      </div>
      <div className="flex">
        <div className={BAR}>
          <Grip vertical />
          <span className="w-[3px]" />
          <ToolRow items={["layerProps"]} />
          <GrayCombo label="Layer control" value="0" width="w-[375px]">
            <span className="flex items-center gap-px pr-1.5">
              <Icon name="bulbO" />
              <Icon name="sunO" />
              <span className="w-1" />
              <Icon name="vpFreezeO" />
              <span className="w-0.5" />
              <Icon name="lockO" />
              <span className="ml-[3px] h-[17px] w-[17px] bg-black" />
            </span>
          </GrayCombo>
          <ToolRow items={["layerMake", "layerPrev", "layerStates"]} />
        </div>
        <div className={`${BAR} ml-0.5`}>
          <Grip vertical />
          <span className="w-[3px]" />
          <GrayCombo label="Color control" value="ByLayer" width="w-[189px]">
            <span className="mr-1 h-[18px] w-[18px] bg-black" />
          </GrayCombo>
          <span className={SPLIT} />
          <GrayCombo label="Linetype control" value="ByLayer" width="w-[200px]">
            <span className="mr-2 h-px w-[75px] bg-black" />
          </GrayCombo>
          <span className={SPLIT} />
          <GrayCombo label="Lineweight control" value="0.30 mm" width="w-[156px]">
            <span className="mr-1.5 h-1 w-11 bg-black" />
          </GrayCombo>
          <span className={SPLIT} />
          <GrayCombo label="Plot style control" value="ByColor" width="w-[149px]">
            <span className="w-2" />
          </GrayCombo>
        </div>
      </div>
    </div>
  );
}

function SideBar({ items, grow = false }: { items: string[]; grow?: boolean }) {
  return (
    <div className={`${grow ? "self-stretch" : "self-start pb-px"} flex w-[31px] shrink-0 flex-col items-center overflow-hidden border border-[#262d37] pt-1`}>
      <Grip />
      <span className="h-0.5 shrink-0" />
      {items.map((n, i) =>
        n === "|" ? (
          <span key={i} className="mb-0.5 mt-[3px] h-0.5 w-[25px] shrink-0 bg-[#e8e8e8]" />
        ) : (
          <button key={i} className="flex h-7 w-7 shrink-0 items-center justify-center" aria-label={n}><Icon name={n} /></button>
        )
      )}
    </div>
  );
}

/* ---------- model space ---------- */

const LABEL = "absolute whitespace-nowrap leading-none";

function ModelSpace() {
  return (
    <div className="relative min-w-0 flex-1 overflow-hidden bg-white">
      <p className="px-1 py-[5px] text-[14px] leading-5 text-black">[−][Top][2D Wireframe]</p>
      <svg className="absolute left-0 top-0" width="1400" height="480" aria-hidden="true">
        <path d="M604.500 59v395M263 344h341M1339.500 59v395M999 344h340" stroke="#000" strokeWidth="4" strokeLinecap="round" fill="none" />
        <path d="M607 344h153" stroke="#cfcfcf" strokeWidth="4" strokeLinecap="round" />
        <rect x="674" y="224" width="100" height="155" fill="#c2fdcb" />
        <path d="M674 344h86" stroke="#a0dcab" strokeWidth="4" strokeLinecap="round" />
        <path d="M835 153 762 226" stroke="#ccccff" strokeWidth="3.500" strokeLinecap="round" />
        <path d="M764 224 750 238" stroke="#9fccd3" strokeWidth="3" />
        <path d="M725 263.500C735 247 747 236 750 222c1-4 2-1 2.500 1 .5 5-.5 9 .5 12 4-2 9-2 13 1-9 4-23 13-41 27.500z" fill="#9ccbd2" />
        <path d="M673.500 223.500h100v156h-100z" fill="none" stroke="#000" strokeDasharray="4 2" />
        <path d="M673.500 175v96M625 223.500h98" stroke="#000" />
        <path d="M679 209l8 8M687 209l-8 8" stroke="#e81010" strokeWidth="3" />
      </svg>
      <span className={`${LABEL} left-[722px] top-[108px] font-['Liberation_Sans'] text-[40px] text-[#0000f0]`}>Crossing Selection</span>
      <span className={`${LABEL} left-[506px] top-[521px] font-['DejaVu_Sans'] text-[49px] text-[#0000ff]`}>(before)</span>
      <span className={`${LABEL} left-[1294px] top-[516px] font-['DejaVu_Sans'] text-[49px] text-[#0000ff]`}>(after)</span>
      <span className={`${LABEL} right-[26px] top-[30px] font-['Liberation_Sans'] text-[60px]`}>
        <span className="text-[#fbc4c4]">Easy</span>
        <span className="text-[#c4fdc8]">Way</span>
        <span className="text-[#c4c5fb]">CAD</span>
      </span>
      <svg className="absolute bottom-3 left-3" width="88" height="88" aria-label="UCS axes">
        <path d="M5.500 19v62.500H68M.500 76.500h11v11h-11z" fill="none" stroke="#000" />
        <path d="M7 0l7.500 8L22 0M14.500 8v7M72 65l15 15M87 65 72 80" fill="none" stroke="#000" strokeWidth="1.200" />
      </svg>
    </div>
  );
}

function Arrow({ d }: { d: string }) {
  return (
    <svg className={FIXED} width="12" height="12" viewBox="0 0 12 12" aria-hidden="true">
      <path d={d} fill="none" stroke="#505050" strokeWidth="2" />
    </svg>
  );
}

function Canvas() {
  return (
    <main className="ml-[5px] mr-1 flex min-w-0 flex-1 flex-col bg-[#efefef]">
      <div className="flex min-h-0 flex-1">
        <ModelSpace />
        <div className="flex w-5 shrink-0 flex-col items-center py-[5px]">
          <Arrow d="M1 8l5-5 5 5" />
          <span className="mt-[5px] h-[21px] w-[19px] bg-[#cbcbcb]" />
          <span className="flex-1" />
          <Arrow d="M1 4l5 5 5-5" />
        </div>
      </div>
      <div className="flex h-5 items-center px-1 pr-[26px]">
        <Arrow d="M8 1 3 6l5 5" />
        <span className="flex-1" />
        <span className="mr-1 h-5 w-5 bg-[#cbcbcb]" />
        <Arrow d="M4 1l5 5-5 5" />
      </div>
    </main>
  );
}

/* ---------- command line & status ---------- */

const OPTIONS: [string, string, string][] = [
  ["cu", "T", "ting edges"],
  ["", "C", "rossing"],
  ["m", "O", "de"],
  ["", "P", "roject"],
  ["e", "R", "ase"],
  ["", "U", "ndo"],
];

function CommandLine() {
  return (
    <div className="ml-1 flex h-[74px] shrink-0">
      <div className="flex w-[30px] shrink-0 flex-col items-center justify-between bg-[#2e3541] py-1.5 pr-1">
        <Grip />
        <Icon name="close" size={14} />
        <Icon name="wrench" size={20} />
      </div>
      <div className="flex min-w-0 flex-1 flex-col font-['DejaVu_Sans_Mono',monospace] text-[15px] text-black">
        <div className="flex h-[49px] flex-col justify-end border-b border-[#2a313c] bg-[#c8c8c8] pl-[3px] leading-[19px]">
          <p>Specify first corner:</p>
          <p>Select object to trim or shift-select to extend or</p>
        </div>
        <div className="flex h-[25px] items-center whitespace-pre bg-white pl-[26px]">
          <Caret big color="#5f5f5f" />
          <b className="ml-2">TRIM</b>
          <span className="ml-[15px]">[</span>
          {OPTIONS.map(([a, k, b]) => (
            <button key={k} className="mr-[5px] rounded-sm bg-[#d2d2d2] px-px leading-[22px] last-of-type:mr-0">
              {a}
              <span className="text-[#0000ff]">{k}</span>
              {b}
            </button>
          ))}
          <label htmlFor="cmd">]: Specify opposite corner:</label>
          <input id="cmd" className="min-w-0 flex-1 outline-none" />
        </div>
      </div>
    </div>
  );
}

const LAYOUTS: [string, string][] = [
  ["Model", "w-[74px] bg-[#3b4453] font-bold text-white"],
  ["Layout1", "w-[78px] bg-[#2d3440] text-[#b4bac3]"],
  ["Layout2", "w-[79px] bg-[#2d3440] text-[#b4bac3]"],
  ["+", "ml-0.5 w-[30px] bg-[#2d3440] text-[#b4bac3] font-bold"],
];

const TRAPEZOID = "[clip-path:polygon(0_0,100%_0,calc(100%-8px)_100%,8px_100%)]";

type StatusItem = [icon: string, width: string, active?: boolean];

const STATUS: StatusItem[][] = [
  [["grid", "w-[29px]"], ["snap", "w-[30px]"], ["v", "w-[17px]"]],
  [["infer", "w-[30px]"]],
  [["dynInput", "w-[31px]"]],
  [["ortho", "w-[28px]", true], ["polar", "w-[32px]"], ["v", "w-[17px]"], ["isodraft", "w-[32px]"], ["v", "w-[18px]"]],
  [["otrack", "w-[30px]"], ["osnap", "w-[29px]", true], ["v", "w-[21px]"], ["lweight", "w-[29px]", true]],
  [["annoVis", "w-[29px]", true], ["annoAuto", "w-[30px]"], ["annoScale", "w-[30px]"], ["1:1", "w-[29px]"], ["v", "w-[13px]"]],
  [["gear", "w-[32px]"], ["v", "w-[19px]"]],
  [["plus", "w-[30px]"]],
  [["quickProps", "w-[30px]"]],
  [["isolate", "w-[30px]"]],
  [["hardware", "w-[30px]"]],
  [["clean", "w-[31px]"], ["menu", "w-[31px]"]],
];

function StatusBar() {
  return (
    <footer className="flex h-10 shrink-0 items-start justify-between border-t border-[#3d4654] pl-[17px] pr-1 pt-px">
      <div className="flex gap-[2px] text-[14px]">
        {LAYOUTS.map(([name, cls]) => (
          <button key={name} className={`${cls} ${TRAPEZOID} h-[22px] leading-[22px]`}>{name}</button>
        ))}
      </div>
      <div className="mt-px flex gap-[3px] text-[14px] text-[#f4f4f4]">
        <button className="h-[30px] w-[59px] bg-[#3b4453]">MODEL</button>
        {STATUS.map((group, g) => (
          <div key={g} className={`${g > 9 ? "ml-[3px]" : ""} flex bg-[#3b4453]`}>
            {group.map(([icon, width, active], i) => (
              <button
                key={i}
                aria-label={icon}
                className={`${width} ${active ? "bg-[#5a8bc0]" : ""} flex h-[30px] items-center justify-center`}
              >
                {icon === "v" ? <Caret big /> : icon === "1:1" ? "1:1" : <Icon name={icon} size={20} />}
              </button>
            ))}
          </div>
        ))}
      </div>
    </footer>
  );
}

/* ---------- taskbar ---------- */

const APPS: { name: string; box: string; art: ReactNode }[] = [
  { name: "Cortana", box: "w-[60px]", art: <circle cx="15" cy="15" r="9" fill="none" stroke="#fff" strokeWidth="2.500" /> },
  {
    name: "Task view",
    box: "w-[60px]",
    art: <path d="M6 5v4h13V5M6 25v-4h13v4M6 12h13v6H6zM24 5v7M24 18v7M23 14h2v3h-2z" fill="none" stroke="#fff" strokeWidth="1.400" />,
  },
  {
    name: "Edge",
    box: "w-[66px]",
    art: (
      <>
        <path d="M1 14C2 5 8 0 15 0c9 0 15 6 15 12 0 5-4 8-8 8-3 0-5-1-3-4 1-4-3-8-8-7-5 0-9 3-10 5z" fill="#35c1b1" />
        <path d="M15 0c9 0 15 6 15 12 0 5-4 8-8 8-3 0-4-1-3-3 5-2 6-12-4-17z" fill="#5fd56b" />
        <path d="M1 14c2-5 9-8 14-4-4 1-6 4-6 8 0 6 5 11 11 12C9 32 0 24 1 14z" fill="#1e88d8" />
        <path d="M10 16c-2 9 8 14 18 7-3 6-8 7-12 7-6-2-9-8-6-14z" fill="#0c59a4" />
      </>
    ),
  },
  {
    name: "Explorer",
    box: "w-[60px]",
    art: (
      <>
        <path d="M1 3h11l3 4H1z" fill="#e5a50a" />
        <path d="M1 6h28v20H1z" fill="#fcd462" />
        <path d="M7 15h16v11h-5v-5h-6v5H7z" fill="#3c96dc" />
      </>
    ),
  },
  {
    name: "Store",
    box: "w-[62px]",
    art: (
      <>
        <path d="M10 8c0-9 10-9 10 0" fill="none" stroke="#ccc" strokeWidth="2" />
        <path d="M1 8h28v20H1z" fill="#fff" />
        <path d="M9 12h5.500v5.500H9z" fill="#f35325" />
        <path d="M15.500 12H21v5.500h-5.500z" fill="#81bc06" />
        <path d="M9 18.500h5.500V24H9z" fill="#05a6f0" />
        <path d="M15.500 18.500H21V24h-5.500z" fill="#ffba08" />
      </>
    ),
  },
  {
    name: "Mail",
    box: "w-[63px]",
    art: (
      <>
        <path d="M0 10 15 1l15 9z" fill="#0c59a4" />
        <path d="M2 10h26v6H2z" fill="#eee" />
        <path d="M0 10l15 9 15-9v19H0z" fill="#28a8ea" />
        <path d="M15 19l15 10V10z" fill="#35c6f4" />
      </>
    ),
  },
  {
    name: "Chrome",
    box: "w-[62px]",
    art: (
      <>
        <path d="M15 15 2.880 8a14 14 0 0 1 24.240 0z" fill="#e04a3f" />
        <path d="M15 15l12.120-7A14 14 0 0 1 15 29z" fill="#fdcf40" />
        <path d="M15 15v14A14 14 0 0 1 2.880 8z" fill="#2da554" />
        <circle cx="15" cy="15" r="6.500" fill="#fff" />
        <circle cx="15" cy="15" r="5" fill="#4285f4" />
      </>
    ),
  },
  {
    name: "AutoCAD",
    box: "w-[62px]",
    art: (
      <>
        <path d="M0 0h30v30H0z" fill="#f9e6e1" />
        <path fillRule="evenodd" d="M12 3h6l7 22h-5l-2-5h-7l-2 5H5zM15 8l-3 8h5z" fill="#b51f27" />
      </>
    ),
  },
  {
    name: "Snip",
    box: "w-[62px]",
    art: (
      <>
        <ellipse cx="12" cy="15" rx="11" ry="6" fill="#8f959b" transform="rotate(-10 12 15)" />
        <ellipse cx="14" cy="9" rx="12" ry="7" fill="#fff" stroke="#d8363a" strokeWidth="1.500" transform="rotate(-10 14 9)" />
        <path d="M5 10l12 8M14 5l3 12" stroke="#888" strokeWidth="1.500" />
        <g fill="none" stroke="#1a85cf" strokeWidth="2">
          <ellipse cx="18" cy="24" rx="3" ry="5" />
          <ellipse cx="24" cy="19" rx="4.500" ry="3.500" />
        </g>
      </>
    ),
  },
  {
    name: "Photoshop",
    box: "w-[62px]",
    art: (
      <>
        <path d="M2 1h27v26H2z" fill="#1d56b0" />
        <path d="M2 14h27v13H2z" fill="#153f86" />
        <text x="15.500" y="19" textAnchor="middle" fontSize="14" fontWeight="bold" fontFamily="Open Sans" fill="#e4edf8">Ps</text>
      </>
    ),
  },
];

function Taskbar() {
  return (
    <div className="flex h-[50px] shrink-0 bg-linear-to-r from-[#20363d] via-[#1f3341] to-[#1a2340] text-white">
      <button className="flex w-[60px] items-center justify-center" aria-label="Start">
        <svg width="20" height="20" aria-hidden="true">
          <path d="M0 3l9-1.500V9.500H0zM10 1.300 20 0v9.500H10zM0 10.500h9v8L0 17zM10 10.500h10V20l-10-1.300z" fill="#fff" />
        </svg>
      </button>
      <label className="flex w-[430px] items-center gap-3.5 border border-[#c9c9c9] bg-[#f1f1f1] pl-3.5 text-[#333]">
        <svg width="22" height="22" viewBox="0 0 22 22" aria-hidden="true">
          <circle cx="14" cy="8" r="6.500" fill="none" stroke="#222" strokeWidth="1.500" />
          <path d="M9.500 12.500 2 20.500" stroke="#222" strokeWidth="1.500" />
        </svg>
        <input placeholder="Type here to search" className="min-w-0 flex-1 bg-transparent text-[18px] outline-none placeholder:text-[#3c3c3c]" />
      </label>
      <div className="flex flex-1">
        {APPS.map(({ name, box, art }, i) => (
          <button key={name} aria-label={name} className={`${box} flex flex-col items-center`}>
            <span className={`${i === 7 ? "bg-[#4c5d66]" : ""} flex h-[47px] w-full items-center justify-center`}>
              <svg width="30" height="30" viewBox="0 0 30 30" aria-hidden="true">{art}</svg>
            </span>
            {i > 5 && <span className={`${i === 7 ? "w-full" : "w-[51px]"} h-[3px] bg-[#76b9ed]`} />}
          </button>
        ))}
      </div>
      <div className="flex items-center pr-[30px]">
        <svg width="110" height="20" viewBox="0 0 110 20" fill="none" stroke="#fff" strokeWidth="1.300" aria-hidden="true">
          <path d="M1 14l7-7 7 7" />
          <path d="M36 5h12v11H33v-5M49 8v5" />
          <path d="M30 2v3M34 2v3M29 5h6v3c0 3-6 3-6 0zM32 10v6" />
          <path d="M36 8h6v5h-6z" fill="#fff" stroke="none" />
          <path d="M62 17C62 9 68 4 76 4M65.500 17c0-6 4-10 10.500-10M69 17c0-4 3-7 7-7M73 17c0-2 1-3.500 3-3.500" />
          <path d="M89 7h3l4-4v14l-4-4h-3zM99 8c1 1 1 3 0 4M102 6c2 2 2 6 0 8M105 4c3 3 3 9 0 12" />
        </svg>
        <span className="ml-2.5 text-[14px]">ENG</span>
        <div className="ml-[14px] w-[80px] text-center text-[14px] leading-[23px]">
          <p>10:50</p>
          <p>02-07-2020</p>
        </div>
        <svg className="ml-5" width="22" height="22" aria-label="Notifications">
          <path d="M1 2h20v15h-7v3.500L10.500 17H1z" fill="none" stroke="#fff" strokeWidth="1.400" />
        </svg>
      </div>
    </div>
  );
}

export default function App() {
  return (
    <div className="flex h-screen flex-col overflow-hidden bg-[#e6edf1] font-['Open_Sans','Noto_Sans',sans-serif]">
      <div className="mx-0.5 mt-0.5 flex min-h-0 flex-1 flex-col border border-[#1490d2] bg-[#222933]">
        <TitleBar />
        <RibbonTabs />
        <Ribbon />
        <Toolbars />
        <div className="ml-0.5 mr-[3px] flex min-h-0 flex-1 bg-[#3b4453] pb-0.5 pr-0.5 pt-px">
          <SideBar
            items={["line", "xline", "pline", "polygon", "rect", "arc", "circle", "cloud", "spline", "ellipse", "ellipseArc", "blockInsert", "blockNew", "points", "hatch", "gradient", "region", "table", "textA", "addSel"]}
          />
          <Canvas />
          <SideBar
            grow
            items={["polysolid", "box", "wedge", "cone", "sphere", "cylinder", "torus", "pyramid", "helix", "plane", "|", "extrude", "presspull", "sweep", "revolve", "loft", "|", "union", "subtract", "intersect", "|", "gizmo", "orbit", "ucs", "presets"]}
          />
          <span className="w-1" />
          <SideBar
            items={["erase", "copyObj", "mirror", "offset", "array", "move", "rotate", "scale", "stretch", "trim", "extend", "breakAt", "break", "join", "chamfer", "fillet", "blend", "explode"]}
          />
        </div>
        <CommandLine />
        <StatusBar />
      </div>
      <Taskbar />
    </div>
  );
}
